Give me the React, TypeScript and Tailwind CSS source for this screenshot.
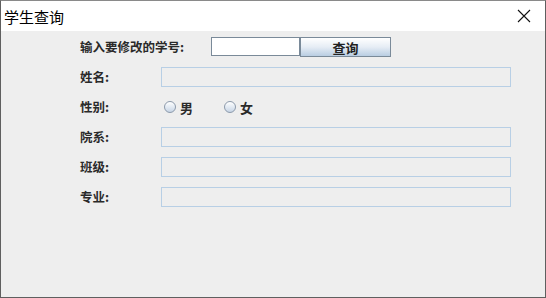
import React from "react";

const font = { fontFamily: '"Noto Sans CJK SC", "Noto Sans", sans-serif' };

function Field() {
  return <div className="ml-[80px] h-[20px] w-[350px] border border-[#b8cfe5] bg-[#eeeeee]" />;
}

function Radio({ label }: { label: string }) {
  return (
    <div className="flex items-center">
      <div className="h-[12px] w-[12px] rounded-full border border-[#8c9aab] bg-gradient-to-b from-[#ffffff] to-[#c7d5e6]" />
      <span className="ml-[4px] text-[13px] font-bold text-[#2a2a2a] leading-none">{label}</span>
    </div>
  );
}

export default function App() {
  return (
    <div className="h-[298px] w-[546px] border border-[#5f5f5f] border-t-[#8a8a8a] bg-[#eeeeee] flex flex-col overflow-hidden" style={font}>
      <div className="h-[30px] bg-white flex items-center justify-between pl-[3px] pr-[14px] shrink-0">
        <span className="text-[15px] text-black leading-none">学生查询</span>
        <svg width="14" height="14" viewBox="0 0 14 14">
          <path d="M1 1 L13 13 M13 1 L1 13" stroke="#111" strokeWidth="1.1" />
        </svg>
      </div>
      <div className="flex flex-col pt-[6px] gap-[10px] pl-[79px] text-[#2a2a2a]">
        <div className="flex h-[20px] items-center">
          <span className="w-[131px] text-[12.5px] font-bold leading-none">输入要修改的学号:</span>
          <div className="h-[19px] w-[89px] border border-[#7a8a99] bg-white self-start" />
          <button className="h-[20px] w-[91px] border border-[#7a8a99] bg-gradient-to-b from-[#ffffff] via-[#e6edf5] to-[#b9cde2] text-[13px] font-bold leading-none text-[#222]">
            查询
          </button>
        </div>
        <div className="flex h-[20px] items-center">
          <span className="w-[1px] whitespace-nowrap text-[12.5px] font-bold leading-none">姓名:</span>
          <Field />
        </div>
        <div className="flex h-[20px] items-center">
          <span className="w-[84px] text-[12.5px] font-bold leading-none">性别:</span>
          <Radio label="男" />
          <div className="w-[31px]" />
          <Radio label="女" />
        </div>
        <div className="flex h-[20px] items-center">
          <span className="w-[1px] whitespace-nowrap text-[12.5px] font-bold leading-none">院系:</span>
          <Field />
        </div>
        <div className="flex h-[20px] items-center">
          <span className="w-[1px] whitespace-nowrap text-[12.5px] font-bold leading-none">班级:</span>
          <Field />
        </div>
        <div className="flex h-[20px] items-center">
          <span className="w-[1px] whitespace-nowrap text-[12.5px] font-bold leading-none">专业:</span>
          <Field />
        </div>
      </div>
    </div>
  );
}
